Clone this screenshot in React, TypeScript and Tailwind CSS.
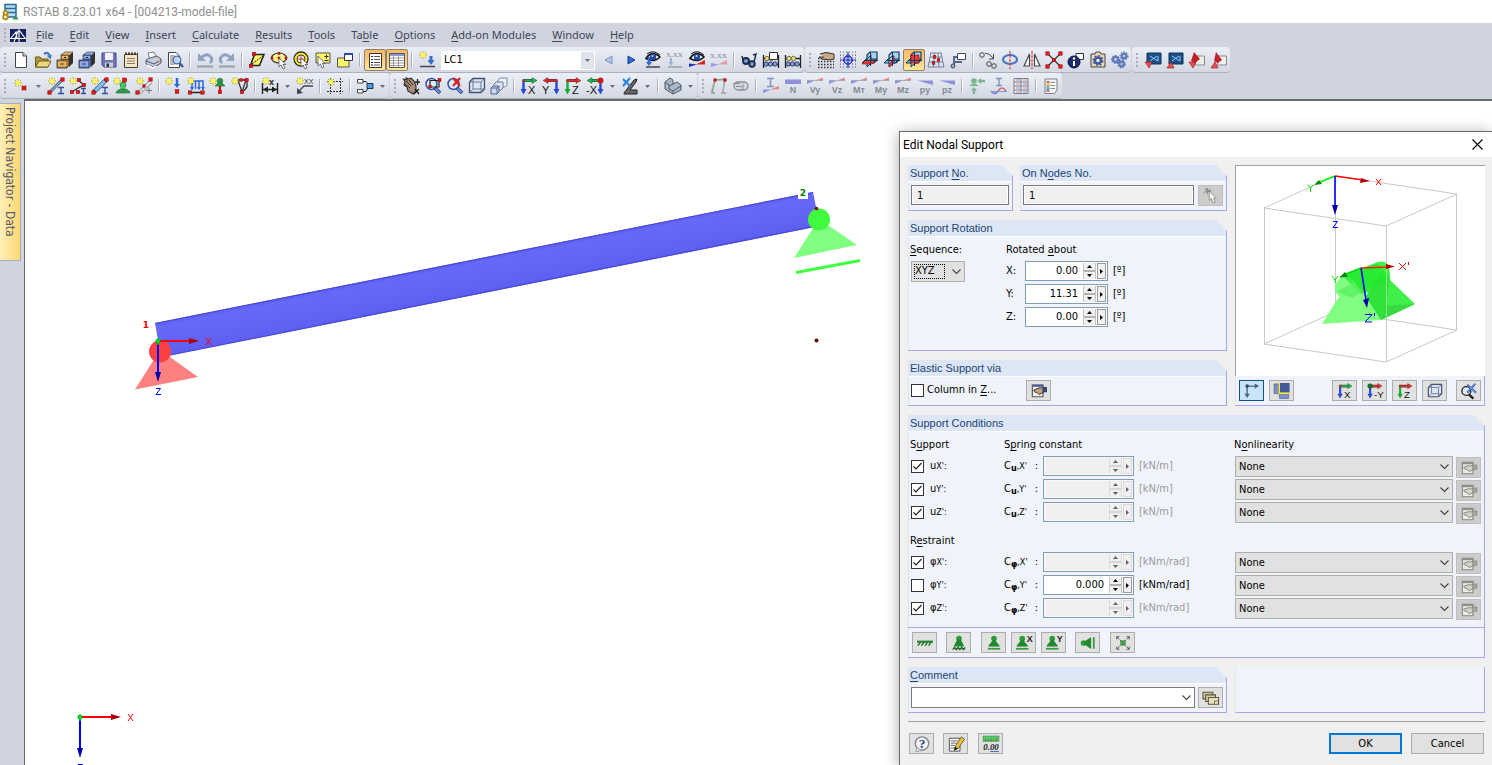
import { useId, useState } from 'react';
import type { ReactNode } from 'react';
import clsx from 'clsx';

const DIALOG_FONT = "font-['DejaVu_Sans_Condensed','Noto_Sans',sans-serif]";

/* ---------- small drawing helpers, used inside the 18x18 icons ---------- */

function Spark({ x = 5, y = 4 }: { x?: number; y?: number }) {
  return (
    <g transform={`translate(${x} ${y})`}>
      <path d="M0-4V4M-4 0H4M-3-3L3 3M3-3L-3 3" stroke="#b8ad18" />
      <circle r="2.4" fill="#fff75a" stroke="none" />
    </g>
  );
}

function Node({ x, y, s = 3.4 }: { x: number; y: number; s?: number }) {
  return <rect x={x - s / 2} y={y - s / 2} width={s} height={s} fill="#e81818" stroke="#8c0000" strokeWidth=".5" />;
}

function AxisIcon({ h, v, label, flip = false, dot }: { h: string; v: string; label: string; flip?: boolean; dot?: string }) {
  return (
    <>
      <g transform={flip ? 'translate(18 0) scale(-1 1)' : undefined}>
        <path d="M3 3.5H14" stroke="#333" strokeWidth="3" />
        <path d="M3 3.5H14" stroke={h} strokeWidth="2" />
        <path d="M12 .5L17 3.5L12 6.5Z" fill={h} stroke="#333" strokeWidth=".4" />
        <path d="M3.5 4V13" stroke={v} strokeWidth="2.4" />
        <path d="M.5 12H6.5L3.5 17.5Z" fill={v} />
        <circle cx="3.5" cy="3.5" r={dot ? 3 : 1.5} fill={dot ?? '#a33'} />
      </g>
      <text x={flip ? 0 : 8} y="16.5" fontSize="11" fill="#111" fontFamily="Liberation Sans, sans-serif">
        {label}
      </text>
    </>
  );
}

function ForceIcon({ label, kind = 'cross' }: { label: string; kind?: 'cross' | 'bar' | 'load' }) {
  return (
    <>
      {kind === 'cross' && (
        <>
          <path d="M1 3.5V7L9 3.5Z" fill="#8f8fdc" />
          <path d="M9 3.5L17 .5V3.5Z" fill="#e08a90" />
          <path d="M1 3.5H17" stroke="#999" strokeWidth=".6" />
        </>
      )}
      {kind === 'bar' && <path d="M1 2.5H17V7H1Z" fill="#8f8fdc" />}
      {kind === 'load' && <path d="M1 3.5H17V8Z" fill="#8f8fdc" />}
      <text x="9" y="16" textAnchor="middle" fontSize="9" fontWeight="bold" fill="#858a94" fontFamily="Liberation Sans, sans-serif">
        {label}
      </text>
    </>
  );
}

function WorkPlane({ red }: { red: string }) {
  return (
    <>
      <path d="M6 4L9 1H16V9L13 12H6Z" fill="#a9d4ee" stroke="#123a5c" strokeWidth="1.2" />
      <path d="M1 12L5 8H16L12 12Z" fill="#7fbde4" stroke="#123a5c" />
      <path d="M6 16V8L10 4V12Z" fill="#8fc9ea" stroke="#123a5c" />
      <path d={red} fill="#f03a3a" stroke="#8c0000" strokeWidth=".6" />
      <path d="M9.5 1V15M3 9.5H17" stroke="#123a5c" />
    </>
  );
}

function Magnifier() {
  return (
    <>
      <circle cx="7.5" cy="7" r="5.5" fill="#dcebfa" stroke="#3450a0" strokeWidth="1.5" />
      <path d="M11 11L16 16" stroke="#26407c" strokeWidth="3.6" />
      <path d="M11.5 11.5L15.5 15.5" stroke="#6f94e4" strokeWidth="2" />
    </>
  );
}

function Pointer() {
  return <path d="M9 7V16L11 14L13 18L15 17L13 13.5H16Z" fill="#fff" stroke="#555" strokeWidth=".8" />;
}

function Cabinet({ light, dark }: { light: string; dark: string }) {
  return (
    <>
      <path d="M5 4L9 1H17L13 5Z" fill={light} stroke="#333" strokeWidth=".6" />
      <path d="M13 5L17 1V12L13 16Z" fill="#333" />
      <path d="M5 4H13V9H5Z" fill={dark} stroke="#333" strokeWidth=".6" />
      <path d="M1 9H11L13 8V14L11 17H1Z" fill={dark} stroke="#333" strokeWidth=".8" />
      <path d="M2 10.5H10V15.5H2ZM6 5H12V7.5H6Z" fill={light} />
      <path d="M4.5 13H7.5M8 6.500H10" stroke="#222" strokeWidth="1.2" />
    </>
  );
}

function Abacus() {
  return (
    <>
      <path d="M1.5 4V17M16.5 4V17M1 7.5H17M1 13.5H17" stroke="#222" strokeWidth="1.3" />
      <circle cx="5" cy="7.5" r="2.2" fill="#f0df6a" stroke="#554" strokeWidth=".8" />
      <circle cx="9.5" cy="7.5" r="2.2" fill="#f0df6a" stroke="#554" strokeWidth=".8" />
      <circle cx="4" cy="13" r="2.2" fill="#7d9de0" stroke="#224" strokeWidth=".8" />
      <circle cx="8.5" cy="13" r="2.2" fill="#7d9de0" stroke="#224" strokeWidth=".8" />
      <circle cx="13" cy="13" r="2.2" fill="#7d9de0" stroke="#224" strokeWidth=".8" />
    </>
  );
}

function Eye() {
  return (
    <>
      <path d="M2 7.5Q8-1.5 16 6Q10 12 2 7.5Z" fill="#fff" stroke="#111" strokeWidth="1.6" />
      <path d="M3 3Q9-2 16 4" stroke="#111" />
      <circle cx="9" cy="6" r="3.2" fill="#2448a0" />
      <circle cx="8.5" cy="5" r="1" fill="#bfe0ff" />
    </>
  );
}

const DOT_GRID = 'M1 1H17M1 4H17M1 7H17M1 10H17M1 13H17M1 16H17';

const ICONS: Record<string, ReactNode> = {
  'New': (
    <>
      <path d="M3.5 1.5H11L14.5 5V16.5H3.5Z" fill="#fff" stroke="#444" />
      <path d="M11 1.5V5H14.5" fill="#ddd" stroke="#444" />
    </>
  ),
  'Open': (
    <>
      <path d="M1.5 16V6H6L8 8H14V16Z" fill="#b5983a" stroke="#6a5818" />
      <path d="M1.500 16L5 10H17L14 16Z" fill="#eadb80" stroke="#6a5818" />
      <path d="M10 3Q14 0 16 5" stroke="#4a7ab8" strokeWidth="2.2" />
      <path d="M12.5 4.5L18 4L16.5 8.5Z" fill="#4a7ab8" />
    </>
  ),
  'Project manager': <Cabinet light="#e2b56a" dark="#b57f32" />,
  'Block manager': <Cabinet light="#8fabe6" dark="#4d6fb8" />,
  'Save': (
    <>
      <path d="M2 2H16V16H4L2 14Z" fill="#7376bb" stroke="#44477e" />
      <path d="M5 2H13V9H5Z" fill="#f2f2fa" />
      <path d="M5 11.5H13V16H5Z" fill="#c9cbd8" />
      <path d="M6.5 12.5H9V16H6.500Z" fill="#333" />
    </>
  ),
  'Report': (
    <>
      <path d="M2.500 3.500H15.5V16.5H2.5Z" fill="#f4e6c8" stroke="#4a3b28" />
      <path d="M3 2.5H16" stroke="#4a3b28" strokeWidth="2" strokeDasharray="2 1" />
      <path d="M5 7.5H13M5 10H13M5 12.5H13" stroke="#8d7a60" />
    </>
  ),
  'Print': (
    <>
      <path d="M4 2L10 1L13 7L6 9Z" fill="#fff" stroke="#777" />
      <path d="M2 9L6 7L13 5L17 8V12L10 16L2 13Z" fill="#c6cae0" stroke="#55596e" />
      <path d="M2 10L10 13L17 9" stroke="#55596e" />
      <path d="M3 14L9 17L12 15" stroke="#fff" strokeWidth="1.4" />
      <path d="M15 8.5V10" stroke="#f0e020" strokeWidth="1.5" />
    </>
  ),
  'Print preview': (
    <>
      <path d="M2.5 1.5H10L13.5 5V16.5H2.5Z" fill="#fff" stroke="#444" />
      <path d="M4 5H9M4 7H8M4 9H8M4 11H8M4 13H9" stroke="#777" />
      <circle cx="11" cy="9" r="3.8" fill="#bcd8f8" stroke="#4c6fa8" strokeWidth="1.3" />
      <path d="M13.5 12L17 16" stroke="#3b5688" strokeWidth="2.4" />
    </>
  ),
  'Undo': (
    <>
      <path d="M5 7Q11 1 15 6Q17 9 14 12" stroke="#8fa3c0" strokeWidth="2.8" />
      <path d="M2 2V10H10Z" fill="#8fa3c0" />
      <path d="M1 15.5H17" stroke="#999fae" strokeWidth="2" />
    </>
  ),
  'Redo': (
    <>
      <path d="M13 7Q7 1 3 6Q1 9 4 12" stroke="#8fa3c0" strokeWidth="2.8" />
      <path d="M16 2V10H8Z" fill="#8fa3c0" />
      <path d="M1 15.5H17" stroke="#999fae" strokeWidth="2" />
    </>
  ),
  'Select rhomboid': (
    <>
      <path d="M6.5 3.5H16L11.5 14.5H2.5Z" fill="#fdf36a" stroke="#222" strokeWidth="1.5" />
      <path d="M4 13L15 5" stroke="#222" strokeDasharray="2 1" />
      <Node x={6} y={3} />
      <Node x={3} y={15} />
    </>
  ),
  'Select ellipse': (
    <>
      <ellipse cx="9" cy="7" rx="7.5" ry="5" fill="#fdf08a" stroke="#333" strokeWidth="1.2" />
      <Node x={2} y={7} s={2} />
      <Node x={9} y={7} s={2} />
      <Node x={9} y={2.5} s={2} />
      <Node x={16} y={7} s={2} />
      <Pointer />
    </>
  ),
  'Select ring': (
    <>
      <circle cx="9" cy="8" r="7" fill="#fde92a" stroke="#333" strokeWidth="1.3" />
      <circle cx="9" cy="8" r="4" fill="#fff" stroke="#333" />
      <path d="M9 5V11M6 8H12" stroke="#d22" />
      <Pointer />
    </>
  ),
  'Select special': (
    <>
      <path d="M2 2H16V12H2Z" fill="#fdf36a" stroke="#555" />
      <path d="M10.5 5.5H14.500M12.500 3.500V7.5M10.5 9.5H14.5" stroke="#333" />
      <path d="M4 5V15L6.5 13L8 17L10 16L8.5 12.500H11Z" fill="#fff" stroke="#555" strokeWidth=".8" />
    </>
  ),
  'New window': (
    <>
      <path d="M1.5 7H13V16H1.5Z" fill="#fdf36a" stroke="#555" />
      <path d="M8.5 2.5H16.5V9.5H8.5Z" fill="#fff" stroke="#333" />
      <path d="M8 3H17" stroke="#2c4a9e" strokeWidth="2" />
    </>
  ),
  'Navigator': (
    <>
      <path d="M3.500 2.500H15.5V16.5H3.500Z" fill="#fff" stroke="#333" />
      <path d="M5 5.5H7M5 8.5H7M5 11.5H7M5 14H7" stroke="#222" />
      <path d="M8 5.5H14M8 8.500H14M8 11.500H14M8 14H14" stroke="#555" />
    </>
  ),
  'Tables': (
    <>
      <path d="M1.500 2.5H16.5V16.5H1.5Z" fill="#fff" stroke="#555" />
      <path d="M2 4H16" stroke="#8a9cd8" strokeWidth="2" />
      <path d="M2 7H16M2 9.500H16M2 12H16M2 14.500H16M5.5 5V16M10.5 5V16" stroke="#777" strokeWidth=".7" />
    </>
  ),
  'New load case': (
    <>
      <Spark />
      <path d="M13 5V12" stroke="#3a6ec8" strokeWidth="3" />
      <path d="M9.5 9H16.5L13 14Z" fill="#3a6ec8" />
      <path d="M2 15.5H17" stroke="#444" strokeWidth="1.5" />
    </>
  ),
  'Previous': <path d="M12 5L5 9L12 13Z" fill="#b4c6ea" stroke="#7d94c8" />,
  'Next': <path d="M6 5L13 9L6 13Z" fill="#2f66d8" stroke="#1d3f94" />,
  'Show loads': (
    <>
      <Eye />
      <path d="M5 6V13" stroke="#2f66d8" strokeWidth="2.4" />
      <path d="M2 11H8L5 15Z" fill="#2f66d8" />
      <path d="M2 16H16" stroke="#444" strokeWidth="1.5" />
    </>
  ),
  'Show load values': (
    <>
      <text x="0" y="6" fontSize="7" fill="#7c8290" fontFamily="Liberation Serif, serif">X.XX</text>
      <path d="M5 7V13" stroke="#9fb0d8" strokeWidth="2" />
      <path d="M2.5 11H7.5L5 15Z" fill="#9fb0d8" />
      <path d="M2 16H16" stroke="#9aa0ac" strokeWidth="1.5" />
    </>
  ),
  'Show results': (
    <>
      <Eye />
      <path d="M1 16V12.5L9 13.5Z" fill="#1b2fd0" />
      <path d="M8 13.5L17 9V13.5Z" fill="#e02020" />
    </>
  ),
  'Show result values': (
    <>
      <text x="0" y="7" fontSize="7" fill="#7c8290" fontFamily="Liberation Serif, serif">X.XX</text>
      <path d="M1 16V12L9 13.500Z" fill="#9a9ae0" />
      <path d="M8 13.5L17 9V13.5Z" fill="#e89aa0" />
    </>
  ),
  'Glasses': (
    <>
      <circle cx="6" cy="10" r="3" fill="#7f9cd0" stroke="#1a2848" strokeWidth="1.8" />
      <circle cx="12" cy="13" r="2.800" fill="#7f9cd0" stroke="#1a2848" strokeWidth="1.8" />
      <path d="M3 9L2 5M8 10L10 11M14 11L16 3L13 4" stroke="#1a2848" strokeWidth="1.4" />
    </>
  ),
  'Calculate window': (
    <>
      <Abacus />
      <path d="M7.5 1.5H15.5V8.5H7.5Z" fill="#fff" stroke="#333" />
    </>
  ),
  'Calculate all': <Abacus />,
  'Grid snap': (
    <>
      <path d="M1 7.500H17M1 10.500H17M1 13.500H17M1 16.500H17" stroke="#333" strokeWidth="1.3" strokeDasharray="1.5 1.5" />
      <path d="M3 3L9 1.5L17 3V8L13 9L5 8L2 6H7" fill="#c9a98c" stroke="#3a2b20" strokeWidth="1" />
    </>
  ),
  'Object snap': (
    <>
      <path d={DOT_GRID} stroke="#556" strokeDasharray="1 2" />
      <circle cx="9" cy="9" r="4" stroke="#2030c8" strokeWidth="1.4" />
      <path d="M9 1V17M1 9H17" stroke="#2030c8" strokeWidth="1.2" />
    </>
  ),
  'Work plane XY': <WorkPlane red="M1 13L5 9H15L11 13Z" />,
  'Work plane YZ': <WorkPlane red="M6 15L11 5V11L7 16Z" />,
  'Work plane XZ': <WorkPlane red="M6 4H14V12H6Z" />,
  'Grid': (
    <>
      <path d="M4 2L1 16M7.5 2L6.5 16M11 2L12 16M14 2L17 16M3 2H15M3 6H15M2 11H16M1 16H17" stroke="#76829c" />
      <Node x={7.5} y={6} s={2.6} />
      <Node x={11.5} y={9} s={2.6} />
      <Node x={6.5} y={12} s={2.6} />
    </>
  ),
  'Comment callout': (
    <>
      <path d="M8.5 2.5H16.5V8.5H8.5Z" fill="#fff" stroke="#445" />
      <path d="M8 6H5V15M5 11H13" stroke="#55688e" strokeWidth="2" />
      <circle cx="4" cy="15" r="2" fill="#9db4de" stroke="#445" />
    </>
  ),
  'Move copy': (
    <>
      <circle cx="3" cy="4" r="2.3" stroke="#444" />
      <circle cx="10" cy="13" r="2.3" stroke="#444" />
      <circle cx="15" cy="15" r="2.3" stroke="#444" />
      <path d="M6 2Q10 2 14 7M14.500 3V8H10" stroke="#444" />
    </>
  ),
  'Rotate': (
    <>
      <ellipse cx="9" cy="8.5" rx="7" ry="4.5" stroke="#4a78c0" strokeWidth="2.2" />
      <path d="M9 0V18" stroke="#e02020" strokeDasharray="3 1" />
    </>
  ),
  'Mirror': (
    <>
      <path d="M6.5 3V15H1Z" fill="#fff" stroke="#444" strokeWidth="1.2" />
      <path d="M11.5 3V15H17Z" fill="#fff" stroke="#444" strokeWidth="1.2" />
      <path d="M9 0V18" stroke="#e02020" strokeDasharray="3 1" />
    </>
  ),
  'Divide': (
    <>
      <path d="M2 2L16 16M16 2L2 16" stroke="#333" strokeWidth="1.3" />
      <Node x={2.5} y={2.5} />
      <Node x={15.5} y={2.5} />
      <Node x={2.5} y={15.5} />
      <Node x={15.5} y={15.5} />
      <Node x={9} y={9} />
    </>
  ),
  'Info': (
    <>
      <path d="M9 2.5H16.5V8.500H9Z" fill="#fff" stroke="#333" />
      <circle cx="7" cy="11" r="6" fill="#1c2c68" stroke="#0b1440" />
      <path d="M7 10V15" stroke="#fff" strokeWidth="2" />
      <circle cx="7" cy="7.5" r="1.2" fill="#fff" />
    </>
  ),
  'Program options': (
    <>
      <path d="M2 3H6L7 1H11L12 3H16V16H2Z" fill="#ead9b2" stroke="#444" />
      <circle cx="9" cy="9.5" r="3" fill="#fff" stroke="#3c5898" strokeWidth="2.6" />
      <circle cx="9" cy="9.5" r="4.800" stroke="#3c5898" strokeWidth="1.4" strokeDasharray="2 1.700" />
    </>
  ),
  'Settings': (
    <>
      <circle cx="4.5" cy="8.5" r="2.5" stroke="#5f7cc0" strokeWidth="2.4" />
      <circle cx="4.5" cy="8.5" r="4" stroke="#3c5490" strokeWidth="1" strokeDasharray="1.500 1.500" />
      <circle cx="13" cy="5" r="2.300" stroke="#5f7cc0" strokeWidth="2.4" />
      <circle cx="13" cy="5" r="4" stroke="#3c5490" strokeWidth="1" strokeDasharray="1.500 1.500" />
      <circle cx="10.5" cy="13" r="2.2" stroke="#5f7cc0" strokeWidth="2.4" />
      <circle cx="10.5" cy="13" r="3.800" stroke="#3c5490" strokeWidth="1" strokeDasharray="1.500 1.500" />
    </>
  ),
  'Import model': (
    <>
      <path d="M3 2H17V13H3Z" fill="#1d4f86" stroke="#10335a" />
      <path d="M6 5L14 10M13 5L6 10M14 5V10" stroke="#8fd0ff" />
      <path d="M1 11H8L5 17Z" fill="#f05050" stroke="#8c1010" strokeWidth=".6" />
    </>
  ),
  'Export model': (
    <>
      <path d="M3 2H17V13H3Z" fill="#1d4f86" stroke="#10335a" />
      <path d="M6 5L14 10M13 5L6 10M14 5V10" stroke="#8fd0ff" />
      <path d="M1 17H8L5 11Z" fill="#f05050" stroke="#8c1010" strokeWidth=".6" />
    </>
  ),
  'Import PDF': (
    <>
      <path d="M7.500 5H16.500V14H7.500Z" fill="#eef0ea" stroke="#888" />
      <path d="M6 1L12 8L7 12L3 10Z" fill="#c41f2c" />
      <path d="M1 11H8L5 17Z" fill="#f05050" stroke="#8c1010" strokeWidth=".6" />
    </>
  ),
  'Export PDF': (
    <>
      <path d="M7.500 5H16.500V14H7.500Z" fill="#eef0ea" stroke="#888" />
      <path d="M6 1L12 9L8 12L4 10Z" fill="#c41f2c" />
      <path d="M1 17H8L5 11Z" fill="#f05050" stroke="#8c1010" strokeWidth=".6" />
    </>
  ),

  /* second row */
  'New node': (
    <>
      <Spark x={6} y={6} />
      <Node x={12} y={11} s={4} />
    </>
  ),
  'New member': (
    <>
      <path d="M3 15L15 3" stroke="#333" strokeWidth="2.6" />
      <path d="M3 15L15 3" stroke="#8fc4ee" strokeWidth="1.2" />
      <Spark />
      <Node x={2.5} y={15.5} />
      <Node x={15.5} y={2.5} />
      <path d="M11 10.5H17M11 16.5H17M14 10V17" stroke="#3450a0" strokeWidth="1.4" />
    </>
  ),
  'New polyline': (
    <>
      <path d="M3 15L9 11L15 8L9 3" stroke="#333" strokeWidth="1.4" />
      <Spark x={4} />
      <Node x={3} y={15} />
      <Node x={10} y={3} />
      <Node x={15} y={8} />
      <Node x={9} y={15} />
      <path d="M12 11.5H17M12 16.5H17M14.5 11V17" stroke="#3450a0" strokeWidth="1.4" />
    </>
  ),
  'New set': (
    <>
      <path d="M3 15L15 3" stroke="#234" strokeWidth="4.5" />
      <path d="M4 14L14 4" stroke="#7fc0f0" strokeWidth="3.2" />
      <Spark x={4} />
      <Node x={2.5} y={15.5} />
      <Node x={15.5} y={2.5} />
      <path d="M11 10.5H17M11 16.5H17M14 10V17" stroke="#3450a0" strokeWidth="1.4" />
    </>
  ),
  'New nodal support': (
    <>
      <circle cx="10" cy="8" r="3" fill="#4fbf6a" stroke="#176c2c" strokeWidth=".6" />
      <path d="M8 9H12L13 13H7Z" fill="#4fbf6a" />
      <path d="M3 16Q4 12 10 12Q16 12 17 16Z" fill="#2f9a4c" stroke="#176c2c" strokeWidth=".6" />
      <Spark x={4} />
      <Node x={11.5} y={3} s={4} />
    </>
  ),
  'New hinge': (
    <>
      <path d="M3 15L15 3M5 17L17 6" stroke="#aaa" strokeWidth="1.4" />
      <Spark />
      <Node x={2.5} y={15.5} />
      <Node x={9} y={9} s={2.4} />
      <Node x={15.5} y={2.5} />
      <path d="M11 13.5H17M14 10.5V16.5" stroke="#777" />
    </>
  ),
  'New nodal load': (
    <>
      <path d="M12 1V8" stroke="#2f66d8" strokeWidth="2.400" />
      <path d="M9 7H15L12 11Z" fill="#2f66d8" />
      <Spark x={4} />
      <Node x={12} y={14.5} s={3.6} />
    </>
  ),
  'New member load': (
    <>
      <path d="M5 13V4H16V13M8.5 4V12M12 4V12" stroke="#2f66d8" strokeWidth="1.5" />
      <path d="M3 10L5 13L7 10ZM10 10L12 13L14 10ZM14 10L16 13L18 10Z" fill="#2f66d8" />
      <path d="M2 15.500H17" stroke="#222" strokeWidth="1.5" />
      <Spark x={4} />
      <Node x={3} y={15.5} />
      <Node x={15.5} y={15.5} />
    </>
  ),
  'New imposed displacement': (
    <>
      <circle cx="11" cy="4" r="2.8" fill="#2f9a4c" stroke="#176c2c" strokeWidth=".6" />
      <path d="M6 9H16L13 6H9Z" fill="#2f9a4c" stroke="#176c2c" strokeWidth=".6" />
      <path d="M11 9V13" stroke="#c01818" strokeWidth="2.2" />
      <Spark x={4} />
      <Node x={11} y={15} />
    </>
  ),
  'New imperfection': (
    <>
      <path d="M7 3L11 15L15 3H7M11 15Q19 10 15 3" stroke="#333" strokeWidth="1.3" />
      <Spark x={4} />
      <Node x={15.5} y={3} />
      <Node x={10} y={3} s={2.5} />
      <Node x={11} y={15} />
    </>
  ),
  'Dimension': (
    <>
      <path d="M1.5 6V17M16.5 6V17M2 12.500H16" stroke="#222" strokeWidth="1.4" />
      <path d="M2 12.500L7 9.500V15.500ZM16 12.500L11 9.500V15.500Z" fill="#222" />
      <Spark />
      <text x="8" y="8" fontSize="9" fontWeight="bold" fill="#222" fontFamily="Liberation Sans, sans-serif">x</text>
    </>
  ),
  'New comment': (
    <>
      <path d="M2 15L8 9H17" stroke="#445" strokeWidth="1.3" />
      <path d="M1 17V11L7 16Z" fill="#445" />
      <Spark x={4} />
      <text x="8" y="7" fontSize="7" fill="#333" fontFamily="Liberation Sans, sans-serif">XX</text>
    </>
  ),
  'New guideline': (
    <>
      <path d="M4.500 1V17M14.5 1V17M1 4.5H17M1 14.5H17" stroke="#333" strokeDasharray="2 1" />
      <Spark x={5} y={5} />
    </>
  ),
  'Connect': (
    <>
      <path d="M1.5 2.5H7V6H1.5ZM1.5 12.5H7V16H1.500Z" fill="#fff" stroke="#444" />
      <path d="M7 4.500H10L12 7M7 14.500H10L12 11" stroke="#222" />
      <path d="M11 6.5H17V11.5H11Z" fill="#4a9ae0" stroke="#234" />
    </>
  ),
  'Pan': (
    <>
      <path d="M3 5L1.5 2L5 3L4 1L8 2L9 1L12 4L14 9V14L11 17L6 14L5 10L2 8Z" fill="#a88d78" stroke="#332a24" strokeWidth="1.100" />
      <path d="M4 4L9 9M7 3L11 8M3 7L8 11" stroke="#332a24" />
      <path d="M13 5H18M15.500 2V8M12 17L17 12M13 12L17 17" stroke="#222" strokeWidth="1.3" />
    </>
  ),
  'Zoom window': (
    <>
      <Magnifier />
      <path d="M6 5.500V3.5H15V10H6Z" stroke="#222" strokeWidth="1.2" />
      <Node x={6} y={9.5} s={2.5} />
      <Node x={15.5} y={3} s={3} />
    </>
  ),
  'Zoom previous': (
    <>
      <Magnifier />
      <path d="M7 1L14 9M14 1L7 9" stroke="#e02020" strokeWidth="2.2" />
    </>
  ),
  'Isometric': (
    <>
      <path d="M1.5 5L5 1.5H16.5V12L13 15.5H1.5Z" fill="#dbe4f2" stroke="#44506e" strokeWidth="1.3" />
      <path d="M1.5 5H13V15.5M13 5L16.5 1.5M5 2V12H16M5 12L1.5 15.5" stroke="#6d7a98" />
    </>
  ),
  'Perspective': (
    <>
      <path d="M8 3L10 1H17V8L15 10H8Z" fill="#e8eefa" stroke="#7a88a8" />
      <path d="M4 7L6 5H13V11L11 13H4Z" fill="#dbe4f6" stroke="#6a7898" />
      <path d="M1 11L3 9H9V15L7 17H1Z" fill="#cfdaf2" stroke="#55648a" />
      <path d="M1 11H7V17M7 11L9 9" stroke="#55648a" />
    </>
  ),
  'View X': <AxisIcon h="#18b848" v="#2848d8" label="X" />,
  'View Y': <AxisIcon h="#e82828" v="#2848d8" label="Y" flip />,
  'View Z': <AxisIcon h="#e82828" v="#18a838" label="Z" />,
  'View -X': <AxisIcon h="#18b848" v="#2848d8" label="-X" flip dot="#d01818" />,
  'View -Y': <AxisIcon h="#e82828" v="#2848d8" label="-Y" dot="#18702c" />,
  'Visibility': (
    <>
      <path d="M3 16L13 3L16 2L15 5L9 13H16V17H3Z" fill="#666" stroke="#222" />
      <path d="M2 2L9 9M9 1L2 9" stroke="#2f86d8" strokeWidth="2.2" />
    </>
  ),
  'Render model': (
    <>
      <path d="M1 5L6 1L9 3V7L13 5L17 8V13L9 17L1 12Z" fill="#a9b8c6" stroke="#4c5866" />
      <path d="M1 5L5 8V12L9 14V17M9 7L5 9M9 14L17 9" stroke="#4c5866" />
    </>
  ),
  'Deformation': (
    <>
      <path d="M2 16L5 3L15 2L13 15" stroke="#7da086" strokeWidth="1.3" />
      <path d="M1 15L4 4L14 3L13 14" stroke="#bbb" />
      <Node x={5} y={3} s={2.4} />
      <Node x={15} y={3} s={2.4} />
      <path d="M1 16H5M11 16H16" stroke="#999" strokeWidth="1.5" />
    </>
  ),
  'Member info': (
    <>
      <rect x="2" y="5" width="14" height="8" rx="4" fill="#d5d7dc" stroke="#8b8f98" strokeWidth="1.300" />
      <path d="M1 6.500H8M4 9.500H10M11 7V12" stroke="#8b8f98" />
    </>
  ),
  'Section forces': (
    <>
      <path d="M5 1.5H12M8.5 1V9M5 9.5H12" stroke="#8295c0" strokeWidth="1.5" />
      <path d="M1 16V12.500H9Z" fill="#8f8fdc" />
      <path d="M8 12.500L17 9V12.500Z" fill="#e08a90" />
    </>
  ),
  'N': <ForceIcon label="N" kind="bar" />,
  'Vy': <ForceIcon label="Vy" />,
  'Vz': <ForceIcon label="Vz" />,
  'MT': <ForceIcon label="Mт" />,
  'My': <ForceIcon label="My" />,
  'Mz': <ForceIcon label="Mz" />,
  'py': <ForceIcon label="py" kind="load" />,
  'pz': <ForceIcon label="pz" kind="load" />,
  'Support forces': (
    <>
      <circle cx="6" cy="4" r="2.800" fill="#7db58a" />
      <path d="M1 9Q6 4 11 9Z" fill="#7db58a" />
      <path d="M6 17V12M17 4H12" stroke="#7db58a" strokeWidth="2.400" />
      <path d="M3 13.500H9L6 10ZM13 1V7L9.500 4Z" fill="#7db58a" />
    </>
  ),
  'Result diagrams': (
    <>
      <path d="M6 1.5H12M9 1V8M6 8.5H12" stroke="#8295c0" strokeWidth="1.5" />
      <path d="M1 14Q5 19 8 14" stroke="#7d7dd8" strokeWidth="1.500" />
      <path d="M8 14Q12 8 16 14" stroke="#d07078" strokeWidth="1.500" />
      <path d="M1 14.5H17" stroke="#8295c0" />
    </>
  ),
  'Result tables': (
    <>
      <path d="M2 1.5H16V16.5H2Z" fill="#eef0f6" stroke="#7b7f88" />
      <path d="M2 5H16M2 9H16M2 13H16M9 1V17" stroke="#7b7f88" />
      <path d="M4 3H8M11 7H15M4 11H8M11 15H15" stroke="#8a8ae0" />
      <path d="M11 3H15M4 7H8M11 11H15M4 15H8" stroke="#e08a90" />
    </>
  ),
  'Panel': (
    <>
      <path d="M3 2H15V13L12.500 16.5H3Z" fill="#f6f6f6" stroke="#7b7f88" />
      <path d="M6 4V7M6 13V15" stroke="#e06868" strokeWidth="3" />
      <path d="M6 6V8" stroke="#e8d860" strokeWidth="3" />
      <path d="M6 8V11" stroke="#7cc080" strokeWidth="3" />
      <path d="M6 11V13.500" stroke="#7a90d8" strokeWidth="3" />
      <path d="M8.500 5.5H13M8.500 8.5H13M8.500 11.5H13" stroke="#8b8f98" />
    </>
  ),

  /* dialog */
  'Pick': (
    <>
      <path d="M2 1L9 4M1 5L9 2M5 0V7" stroke="#8b8b86" strokeWidth="1.3" />
      <path d="M7 3V14L9.500 12L11.500 17L14 16L12 11.5H15Z" fill="#f4f4ee" stroke="#777" strokeWidth=".8" />
    </>
  ),
  'Edit': (
    <>
      <path d="M1.500 2.500H13.500V15.5H1.500Z" fill="#f0f0ea" stroke="#555" strokeWidth="1.300" />
      <path d="M1 3H14" stroke="#44588c" strokeWidth="2.400" />
      <path d="M3 8L9 5.500H14V10.500L9 13L7 11L4 10Z" fill="#c0a083" stroke="#3a2b20" />
      <path d="M13 4.500H18V10.500H13Z" fill="#33486c" />
    </>
  ),
  'Edit disabled': (
    <>
      <path d="M1.500 2.5H13.500V15.5H1.500Z" fill="#ecece6" stroke="#84847e" strokeWidth="1.200" />
      <path d="M1 3.500H14" stroke="#8f8f88" strokeWidth="2.400" />
      <path d="M3 8L8 6.500H14V11L9 13L7 11L4 10Z" fill="#d2d2cc" stroke="#77776f" strokeWidth=".9" />
      <path d="M13 5.500H18V10.500H13Z" fill="#a4a49e" stroke="#77776f" strokeWidth=".5" />
    </>
  ),
  'Local axes': (
    <>
      <path d="M3.5 4V14M3 3.5H13" stroke="#4a6284" strokeWidth="1.5" />
      <path d="M12 .5L17 3.5L12 6.5ZM.5 12H6.5L3.5 17Z" fill="#4a6284" />
      <circle cx="3.5" cy="3.5" r="2" fill="#33486a" />
    </>
  ),
  'Render': (
    <>
      <path d="M0 1H6V12H0Z" fill="#7f8fc4" stroke="#44548e" strokeWidth=".6" />
      <path d="M6 0H17.500V11H6Z" fill="#44589c" />
      <path d="M6 12H16.500V17.500H6Z" fill="#7f8fc4" stroke="#44548e" strokeWidth=".6" />
      <path d="M6 0V11.5H17.500" stroke="#f6ea20" strokeWidth="1.5" />
    </>
  ),
  'Zoom all': (
    <>
      <circle cx="6" cy="9" r="5" fill="#e4ecf4" stroke="#222" strokeWidth="1.5" />
      <path d="M9 13L14 17.500" stroke="#222" strokeWidth="2.800" />
      <path d="M7 2L17 11M16 1L7 11" stroke="#3058b8" strokeWidth="2.2" />
      <path d="M7 2L17 11M16 1L7 11" stroke="#8fb0f0" strokeWidth=".8" />
    </>
  ),
  'Fixed': (
    <>
      <path d="M0 7.500H18" stroke="#1f8a2c" strokeWidth="2.4" />
      <path d="M1 12L4 8M5 12L8 8M9 12L12 8M13 12L16 8" stroke="#1f6a2c" strokeWidth="1.6" />
    </>
  ),
  'Hinged': (
    <>
      <circle cx="9" cy="4" r="3.200" fill="#2f9a3c" />
      <path d="M7 5H11L15 13H3Z" fill="#1f8a2c" />
      <path d="M2 16.500L4 14L6 16.500L8 14L10 16.500L12 14L14 16.500L16 14" stroke="#1f6a2c" strokeWidth="1.6" />
    </>
  ),
  'Sliding': (
    <>
      <circle cx="9" cy="4" r="3.200" fill="#2f9a3c" />
      <path d="M8 6H10L15 12.500H3Z" fill="#1f8a2c" stroke="#1f8a2c" />
      <path d="M2 15.5H16" stroke="#3b9a44" strokeWidth="2" />
    </>
  ),
  'Lateral': (
    <>
      <circle cx="4" cy="9" r="3.200" fill="#2f9a3c" />
      <path d="M5 8L12 3V15L5 10Z" fill="#1f8a2c" stroke="#1f8a2c" />
      <path d="M15.500 2.500V15.500" stroke="#3b9a44" strokeWidth="2" />
    </>
  ),
  'Free': (
    <>
      <path d="M2 2L16 16M16 2L2 16" stroke="#555" strokeDasharray="4 1" />
      <path d="M2 5V2H5M13 2H16V5M16 13V16H13M5 16H2V13" stroke="#444" />
      <path d="M6.500 6.500H11.500V11.500H6.500Z" fill="#3fa84c" stroke="#1f6a2c" strokeWidth=".6" />
    </>
  ),
  'Comment library': (
    <>
      <path d="M0 2.5H11V10H0Z" fill="#cfc498" stroke="#5c5540" strokeWidth="1.200" />
      <path d="M3 5.5H14V13H3Z" fill="#ddd2a8" stroke="#5c5540" strokeWidth="1.200" />
      <path d="M6 8.500H17.500V16H6Z" fill="#e9dfb8" stroke="#5c5540" strokeWidth="1.200" />
      <path d="M13 16V12.500H17.500" fill="#fff" stroke="#5c5540" />
    </>
  ),
  'Help': (
    <>
      <circle cx="9" cy="8.500" r="7.500" fill="#f0f2f6" stroke="#7d848e" strokeWidth="1.5" />
      <path d="M3 13L2 18L9 16Z" fill="#d7dbe2" stroke="#7d848e" strokeWidth=".6" />
      <text x="9" y="13.500" textAnchor="middle" fontSize="15" fontWeight="bold" fill="#2c4470" fontFamily="Liberation Serif, serif">?</text>
    </>
  ),
  'Notes': (
    <>
      <path d="M1.500 2.5H13.5V17H1.500Z" fill="#fff" stroke="#444" />
      <path d="M3 5.5H11M3 8H10M3 10.5H8M3 13.5H8" stroke="#556" />
      <path d="M8 12L15 1L18.500 3.500L11.500 14L7 16Z" fill="#f2c32c" stroke="#333" strokeWidth=".8" />
      <path d="M8 12L11.500 14L7 16.500Z" fill="#222" />
    </>
  ),
  'Units': (
    <>
      <path d="M0 0H18V6H0Z" fill="#5fc46a" stroke="#3b8a44" strokeWidth=".6" />
      <path d="M3 3V6M6 4V6M9 3V6M12 4V6M15 3V6" stroke="#1f6a2c" strokeWidth=".8" />
      <text x="9" y="15.500" textAnchor="middle" fontSize="10" fontStyle="italic" fontWeight="bold" fill="#222" fontFamily="Liberation Serif, serif">0.00</text>
      <path d="M8 17.500H18" stroke="#3a58b0" />
    </>
  ),
};

ICONS['Sliding X'] = (
  <>
    <g transform="translate(-2 0)">{ICONS['Sliding']}</g>
    <text x="12" y="8" fontSize="10" fontWeight="bold" fill="#222" fontFamily="Liberation Sans, sans-serif">X</text>
  </>
);
ICONS['Sliding Y'] = (
  <>
    <g transform="translate(-2 0)">{ICONS['Sliding']}</g>
    <text x="12" y="8" fontSize="10" fontWeight="bold" fill="#222" fontFamily="Liberation Sans, sans-serif">Y</text>
  </>
);

function Icon({ name }: { name: string }) {
  return (
    <svg className="size-[18px] shrink-0 overflow-visible" viewBox="0 0 18 18" fill="none" aria-hidden="true">
      {ICONS[name]}
    </svg>
  );
}

/* Underlines the letter that follows an underscore */
function Mnemonic({ text }: { text: string }) {
  const at = text.indexOf('_');
  if (at < 0) return <>{text}</>;
  return (
    <>
      {text.slice(0, at)}
      <span className="underline underline-offset-2">{text[at + 1]}</span>
      {text.slice(at + 2)}
    </>
  );
}

/* ---------- main window ---------- */

const MENU = ['_File', '_Edit', '_View', '_Insert', '_Calculate', '_Results', '_Tools', 'Ta_ble', '_Options', '_Add-on Modules', '_Window', '_Help'];

// '|' is a separator, '>' at the end adds a drop-down arrow
const FILE_TOOLS = ['New', 'Open', 'Project manager', 'Block manager', 'Save', 'Report', 'Print', 'Print preview', '|', 'Undo', 'Redo', '|', 'Select rhomboid', 'Select ellipse', 'Select ring', 'Select special', 'New window', '|', 'Navigator', 'Tables', '|', 'New load case'];
const LOAD_TOOLS = ['Previous', 'Next', 'Show loads', 'Show load values', 'Show results', 'Show result values', '|', 'Glasses', 'Calculate window', 'Calculate all'];
const PLANE_TOOLS = ['Grid snap', 'Object snap', 'Work plane XY', 'Work plane YZ', 'Work plane XZ', 'Grid', 'Comment callout', '|', 'Move copy', 'Rotate', 'Mirror', 'Divide', 'Info', 'Program options', 'Settings'];
const EXPORT_TOOLS = ['Import model', 'Export model', 'Import PDF', 'Export PDF'];
const INSERT_TOOLS = ['New node>', 'New member', 'New polyline', 'New set', 'New nodal support', 'New hinge', '|', 'New nodal load', 'New member load', 'New imposed displacement', 'New imperfection', '|', 'Dimension>', 'New comment', '|', 'New guideline', '|', 'Connect>'];
const VIEW_TOOLS = ['Pan', 'Zoom window', 'Zoom previous', 'Isometric', 'Perspective', '|', 'View X', 'View Y', 'View Z', 'View -X>', 'Visibility>', '|', 'Render model>'];
const RESULT_TOOLS = ['Deformation', 'Member info', '|', 'Section forces', 'N', 'Vy', 'Vz', 'MT', 'My', 'Mz', 'py', 'pz', '|', 'Support forces', 'Result diagrams', 'Result tables', '|', 'Panel'];
const ACTIVE_TOOLS = ['Navigator', 'Tables', 'Work plane XZ'];

function DownArrow() {
  return (
    <svg className="h-[3px] w-[5px]" viewBox="0 0 5 3" aria-hidden="true">
      <path d="M0 0H5L2.5 3Z" fill="#6a6f7a" />
    </svg>
  );
}

function Tools({ items }: { items: string[] }) {
  return (
    <>
      {items.map((item, i) => {
        if (item === '|') {
          return (
            <span key={i} className="flex w-2 justify-center">
              <span className="h-[14px] w-[2px] border-l border-[#a9afbb] bg-white" />
            </span>
          );
        }
        const name = item.replace('>', '');
        return (
          <span key={i} className="flex items-center">
            <button
              type="button"
              aria-label={name}
              className={clsx(
                'flex h-[22px] w-[22px] items-center justify-center',
                ACTIVE_TOOLS.includes(name) && 'rounded-xs border border-[#8f8168] bg-linear-to-b from-[#fbb765] to-[#ffe79a]',
              )}
            >
              <Icon name={name} />
            </button>
            {item.endsWith('>') && (
              <button type="button" aria-label={`${name} menu`} className="flex h-[22px] w-[13px] items-center justify-center">
                <DownArrow />
              </button>
            )}
          </span>
        );
      })}
    </>
  );
}

function Grip() {
  return (
    <span className="flex w-[10px] flex-col items-center gap-[2px]">
      <i className="size-[2px] bg-[#a8aebb]" />
      <i className="size-[2px] bg-[#a8aebb]" />
      <i className="size-[2px] bg-[#a8aebb]" />
      <i className="size-[2px] bg-[#a8aebb]" />
    </span>
  );
}

function Toolbar({ label, children }: { label: string; children: ReactNode }) {
  return (
    <div
      role="toolbar"
      aria-label={label}
      className="mr-px flex h-[26px] shrink-0 items-center rounded-sm border-b border-[#aab0bc] bg-linear-to-b from-[#ebeff7] to-[#d3d8e3] pt-px"
    >
      <Grip />
      {children}
    </div>
  );
}

function TitleBar() {
  return (
    <header className="flex h-[23px] shrink-0 items-center gap-1 bg-white pl-[1px] text-[12px] text-[#8f8f8f]">
      <svg className="size-[18px]" viewBox="0 0 18 18" fill="none" aria-hidden="true">
        <path d="M4 1.500H15V14H4Z" fill="#b8dff5" stroke="#2a6a94" strokeWidth="1.5" />
        <path d="M4 5.500H15M4 9.500H15" stroke="#2a6a94" strokeWidth="1.5" />
        <path d="M12 14.5H17V16.500H12Z" fill="#2f9a3c" />
        <circle cx="4.500" cy="10" r="2" fill="#fff" stroke="#b38a10" strokeWidth="1.8" />
        <circle cx="4.500" cy="14" r="2.3" fill="#fff" stroke="#b38a10" strokeWidth="1.8" />
      </svg>
      <h1 className="font-[Roboto,sans-serif]">RSTAB 8.23.01 x64 - [004213-model-file]</h1>
    </header>
  );
}

function MenuBar() {
  return (
    <nav className="flex h-[24px] shrink-0 items-center">
      <Grip />
      <svg className="mr-[2px] h-[13px] w-4" viewBox="0 0 16 13" fill="none" aria-hidden="true">
        <path d="M0 0H16V13H0Z" fill="#17235e" />
        <path d="M0 9.500H16M1 9L6 3L7 9M9 13V1L15 9M4 13L8 2" stroke="#fff" strokeWidth="1.1" />
      </svg>
      {MENU.map((item) => (
        <button key={item} type="button" className="px-2 text-[11px] text-[#3f4458]">
          <Mnemonic text={item} />
        </button>
      ))}
    </nav>
  );
}

function LoadCaseSelect() {
  return (
    <div className="relative mx-[3px] flex w-[154px]">
      <select aria-label="Load case" className={clsx('h-[19px] w-full appearance-none bg-white pl-[3px] text-[11px] text-black outline-none', DIALOG_FONT)}>
        <option>LC1</option>
      </select>
      <span className="pointer-events-none absolute top-[1px] right-[1px] flex h-[17px] w-[13px] items-center justify-center bg-[#dfe3eb]">
        <DownArrow />
      </span>
    </div>
  );
}

function Axes({ x, y }: { x: number; y: number }) {
  return (
    <g transform={`translate(${x} ${y})`}>
      <path d="M0 0H32" stroke="#ff0000" strokeWidth="2" />
      <path d="M31-3L41 0L31 3Z" fill="#a80000" />
      <path d="M0 0V32" stroke="#0000ff" strokeWidth="2" />
      <path d="M-3 31H3L0 41Z" fill="#0000a8" />
      <circle r="2.5" fill="#00b020" />
      <path d="M-2-2L0 1L2-2M0 1V4" stroke="#00ff20" />
      <path d="M48-3L53 4M53-3L48 4" stroke="#ff0000" />
      <path d="M-2 47.500H2.500L-2 53.500H3" stroke="#0000ff" />
    </g>
  );
}

function ModelView() {
  return (
    <svg className="block size-full" fill="none" role="img" aria-label="Model view">
      <defs>
        <linearGradient id="beam" x1="480" y1="258" x2="487" y2="293" gradientUnits="userSpaceOnUse">
          <stop offset="0" stopColor="#5c5cec" />
          <stop offset=".12" stopColor="#6868f8" />
          <stop offset=".92" stopColor="#5f5ff2" />
          <stop offset="1" stopColor="#5555e6" />
        </linearGradient>
      </defs>
      <g transform="translate(-25 -101)">
        <path d="M155 323L813 192L817 212L815 227L161 357Z" fill="url(#beam)" />
        <path d="M155 323.5L813 192.5M168 355.500L814 226.500" stroke="#4a4ad8" strokeWidth="1.200" />
        <path d="M160 350L198 377L135 389.5Z" fill="#ff8080" />
        <circle cx="160" cy="351.5" r="11" fill="#fa4040" />
        <path d="M819 219L857 245L794 258Z" fill="#80ff80" />
        <circle cx="819" cy="219.5" r="11" fill="#40fa40" />
        <path d="M796 272.5L860 260.5" stroke="#40ff40" strokeWidth="3" />
        <circle cx="816.5" cy="208.5" r="1.8" fill="#800000" />
        <circle cx="816.5" cy="340.5" r="2" fill="#600000" />
        <path d="M798 187H808V199H798Z" fill="#fff" />
        <g fontFamily="DejaVu Sans, sans-serif" fontSize="9" fontWeight="bold" textAnchor="middle">
          <text x="803" y="196" fill="#008000">2</text>
          <text x="146" y="328" fill="#ff0000">1</text>
        </g>
        <Axes x={158} y={341} />
        <Axes x={80} y={717} />
      </g>
    </svg>
  );
}

/* ---------- dialog controls ---------- */

function Group({ title, className, children }: { title: string; className?: string; children: ReactNode }) {
  return (
    <section
      className={clsx(
        'border-r border-b border-[#a6a6ee] bg-[#f0f4fa] [clip-path:polygon(0_0,calc(100%-11px)_0,100%_11px,100%_100%,0_100%)]',
        className,
      )}
    >
      <h2 className="h-[17px] border-b border-white bg-[#dce6f4] bg-clip-padding pl-[2px] font-['Liberation_Sans',Arial,sans-serif] text-[11px] leading-4 text-[#1c4477]">
        <Mnemonic text={title} />
      </h2>
      <div className="border-l border-[#dce6f4]">{children}</div>
    </section>
  );
}

interface IconButtonProps {
  name: string;
  icon?: string;
  disabled?: boolean;
  selected?: boolean;
  className?: string;
}

function IconButton({ name, icon = name, disabled, selected, className }: IconButtonProps) {
  return (
    <button
      type="button"
      aria-label={name}
      disabled={disabled}
      className={clsx(
        'flex h-[21px] w-[25px] shrink-0 items-center justify-center border',
        selected ? 'border-[#0a5596] bg-[#cce4f7]' : disabled ? 'border-[#bfbfbf] bg-[#cccccc]' : 'border-[#adadad] bg-[#e1e1e1]',
        className,
      )}
    >
      <svg className="h-4 w-4 overflow-visible" viewBox="0 0 18 18" fill="none" aria-hidden="true">
        {ICONS[icon]}
      </svg>
    </button>
  );
}

function Select({ label, options, className, selectClass }: { label: string; options: string[]; className?: string; selectClass: string }) {
  return (
    <div className={clsx('relative', className)}>
      <select aria-label={label} className={clsx('block h-[21px] w-full appearance-none border pl-[3px] text-[11px] text-black outline-none', selectClass)}>
        {options.map((option) => (
          <option key={option}>{option}</option>
        ))}
      </select>
      <svg className="pointer-events-none absolute top-2 right-[4px] h-[6px] w-[9px]" viewBox="0 0 9 6" fill="none" aria-hidden="true">
        <path d="M.5 .5L4.5 4.5L8.5 .5" stroke="#444" strokeWidth="1.1" />
      </svg>
    </div>
  );
}

function SpinBox({ id, value, disabled, className }: { id: string; value: string; disabled?: boolean; className?: string }) {
  const [text, setText] = useState(value);
  const fill = disabled ? '#606060' : '#000';
  return (
    <div className={clsx('flex h-5 border border-[#7f9db9] p-[1px]', disabled ? 'bg-[#f8f8f8]' : 'bg-white', className)}>
      <input
        id={id}
        disabled={disabled}
        value={text}
        onChange={(e) => setText(e.target.value)}
        className="min-w-0 flex-1 pr-[5px] text-right text-[11px] text-black outline-none disabled:bg-[#f0f0f0]"
      />
      <div className={clsx('flex w-[13px] flex-col gap-[2px] border-x', disabled ? 'border-[#dadada] bg-[#d6d6d6]' : 'border-[#c4c4c4] bg-[#b4b4b4]')}>
        <button type="button" aria-label="Increase" disabled={disabled} className="flex flex-1 items-center justify-center bg-[#f0f0f0]">
          <svg className="h-[3px] w-[5px]" viewBox="0 0 5 3" aria-hidden="true">
            <path d="M0 3H5L2.5 0Z" fill={fill} />
          </svg>
        </button>
        <button type="button" aria-label="Decrease" disabled={disabled} className="flex flex-1 items-center justify-center bg-[#f0f0f0]">
          <svg className="h-[3px] w-[5px]" viewBox="0 0 5 3" aria-hidden="true">
            <path d="M0 0H5L2.5 3Z" fill={fill} />
          </svg>
        </button>
      </div>
      <button
        type="button"
        aria-label="More"
        disabled={disabled}
        className={clsx('ml-[1px] flex w-[9px] items-center justify-center border bg-[#f0f0f0]', disabled ? 'border-[#dadada]' : 'border-[#9a9a9a]')}
      >
        <svg className="h-[5px] w-[3px]" viewBox="0 0 3 5" aria-hidden="true">
          <path d="M0 0V5L3 2.5Z" fill={fill} />
        </svg>
      </button>
    </div>
  );
}

function CheckBox({ initial, children }: { initial: boolean; children?: ReactNode }) {
  const [checked, setChecked] = useState(initial);
  return (
    <label className="flex items-center">
      <span className="relative mr-[3px] size-[13px]">
        <input
          type="checkbox"
          checked={checked}
          onChange={(e) => setChecked(e.target.checked)}
          className="block size-[13px] appearance-none border border-[#333] bg-white"
        />
        {checked && (
          <svg className="pointer-events-none absolute inset-0" viewBox="0 0 13 13" fill="none" aria-hidden="true">
            <path d="M2.5 6.5L5 9L10.5 3" stroke="#222" strokeWidth="1.2" />
          </svg>
        )}
      </span>
      {children}
    </label>
  );
}

/* ---------- dialog content ---------- */

const ROTATIONS = [
  { axis: 'X', value: '0.00' },
  { axis: 'Y', value: '11.31' },
  { axis: 'Z', value: '0.00' },
];

function SupportRotation() {
  return (
    <Group title="Support Rotation">
      <div className="flex pt-1 pb-5 pl-[2px]">
        <div className="w-[95px]">
          <div className="-ml-px h-5 leading-[18px]">
            <Mnemonic text="_Sequence:" />
          </div>
          <div className="relative w-[54px]">
            <Select label="Sequence" options={['XYZ', 'XZY', 'YXZ', 'YZX', 'ZXY', 'ZYX']} selectClass="border-[#adadad] bg-[#e1e1e1]" />
            <span className="pointer-events-none absolute top-[3px] left-[3px] h-[15px] w-[31px] border border-dotted border-black" />
          </div>
        </div>
        <div>
          <div className="h-5 leading-[18px]">
            <Mnemonic text="Rotated _about" />
          </div>
          {ROTATIONS.map((rotation) => (
            <div key={rotation.axis} className="flex h-[23px] items-start leading-5">
              <label htmlFor={`rotation-${rotation.axis}`} className="w-[19px]">
                {rotation.axis}:
              </label>
              <SpinBox id={`rotation-${rotation.axis}`} value={rotation.value} className="w-[83px]" />
              <span className="ml-[5px]">[º]</span>
            </div>
          ))}
        </div>
      </div>
    </Group>
  );
}

function Preview() {
  return (
    <div className="flex flex-col">
      <div className="h-[211px] border-t border-l border-[#a0a0a0] bg-white">
        <svg className="block h-[209px] w-full" viewBox="0 0 249 209" fill="none" role="img" aria-label="Support preview">
          <g stroke="#c8c8c8">
            <path d="M28 42L150 60L221 28L99 10Z" />
            <path d="M28 178L150 196L221 164L99 146Z" />
            <path d="M28.5 42V178M150.5 60V196M220.5 28V164M99.5 10V146" />
          </g>
          <path d="M105 110L142 96Q150 94 153 101L154 112Q152 118 146 120L114 134Q104 132 101 124Z" fill="#22f030" fillOpacity=".85" />
          <path d="M153 101L154 114L179 138L145 154L125 137Z" fill="#40f048" />
          <path d="M133 141L179 138L145 154Z" fill="#38d840" />
          <path d="M125 137L145 107L154 114L148 150Z" fill="#2ee436" />
          <path d="M86 158L102 132L125 123L145 154Z" fill="#80ff80" />
          <circle cx="110" cy="122" r="11" fill="#80ff80" />
          <path d="M106 109L142 97L154 112L125 128Z" fill="#1ee828" fillOpacity=".7" />
          <path d="M101 126L118 116L126 126L116 132Z" fill="#58f060" fillOpacity=".8" />
          <path d="M150.5 94V154" stroke="#8fe48f" />
          {/* global axes */}
          <path d="M99 10L127 14" stroke="#ff0000" strokeWidth="1.6" />
          <path d="M125 12L134 15L124 17Z" fill="#b00000" />
          <path d="M99 10L84 16" stroke="#00ff00" strokeWidth="1.6" />
          <path d="M78 19L83 14L86 18Z" fill="#008a00" />
          <path d="M99 10V42" stroke="#0000ff" strokeWidth="1.6" />
          <path d="M96 39H102L99 49Z" fill="#0000a8" />
          <path d="M140 13L145 19M145 13L140 19" stroke="#ff0000" />
          <path d="M72 19L74.5 22L77 19M74.5 22V26" stroke="#00e000" />
          <path d="M97 55.5H101.500L97 61.500H102" stroke="#0000ff" />
          {/* local axes */}
          <path d="M125 102L150 101" stroke="#ff2000" strokeWidth="1.6" />
          <path d="M150 98L159 100.5L150 103Z" fill="#b00000" />
          <path d="M125 102L110 108" stroke="#00e000" strokeWidth="1.6" />
          <path d="M104 111L109 106L112 111Z" fill="#008a00" />
          <path d="M125 102L130 134" stroke="#0000ff" strokeWidth="1.6" />
          <path d="M127 134L133 132L131 142Z" fill="#0000a8" />
          <path d="M163 97L170 104M170 97L163 104M172.5 96V99" stroke="#ff0000" />
          <path d="M96 110L99 114L102 110M99 114V117M104.5 110V112" stroke="#00e000" />
          <path d="M129 148.500H136L129 156H136M138.5 147V150" stroke="#0000ff" />
        </svg>
      </div>
      <div className="flex flex-1 items-start border-r border-b border-l border-[#a6a6ee] border-l-[#dce6f4] bg-[#f0f4fa] pt-1 pr-[3px] pl-[3px]">
        <IconButton name="Local axes" selected />
        <IconButton name="Render" className="ml-[5px]" />
        <div className="ml-auto flex gap-[5px]">
          <IconButton name="View X" />
          <IconButton name="View -Y" />
          <IconButton name="View Z" />
          <IconButton name="Isometric" />
          <IconButton name="Zoom all" className="ml-1" />
        </div>
      </div>
    </div>
  );
}

interface Condition {
  symbol: string;
  axis: string;
  unit: string;
  checked: boolean;
}

const SUPPORTS: Condition[] = [
  { symbol: 'u', axis: 'X', unit: '[kN/m]', checked: true },
  { symbol: 'u', axis: 'Y', unit: '[kN/m]', checked: true },
  { symbol: 'u', axis: 'Z', unit: '[kN/m]', checked: true },
];

const RESTRAINTS: Condition[] = [
  { symbol: 'φ', axis: 'X', unit: '[kNm/rad]', checked: true },
  { symbol: 'φ', axis: 'Y', unit: '[kNm/rad]', checked: false },
  { symbol: 'φ', axis: 'Z', unit: '[kNm/rad]', checked: true },
];

function ConditionRow({ symbol, axis, unit, checked }: Condition) {
  const id = useId();
  return (
    <div className="grid h-[23px] grid-cols-[93px_39px_192px_1fr_28px] items-start leading-5">
      <CheckBox initial={checked}>
        <span className="ml-[3px]">
          {symbol}
          <span className="text-[9px]">{axis}':</span>
        </span>
      </CheckBox>
      <label htmlFor={id} className="flex justify-between pr-[5px]">
        <span>
          C<sub className="text-[9px] font-bold">{symbol}</sub>
          <span className="text-[9px]">,{axis}'</span>
        </span>
        :
      </label>
      <div className="flex">
        <SpinBox id={id} value={checked ? '' : '0.000'} disabled={checked} className="w-[91px]" />
        <span className={clsx('ml-[5px]', checked ? 'text-[#9a9a9a]' : 'text-black')}>{unit}</span>
      </div>
      <Select label={`Nonlinearity ${symbol}${axis}'`} options={['None']} selectClass="border-[#adadad] bg-[#e1e1e1]" />
      <IconButton name="Edit nonlinearity" icon="Edit disabled" disabled className="mt-px ml-[3px]" />
    </div>
  );
}

function SupportConditions() {
  return (
    <div className="col-span-2">
      <Group title="Support Conditions">
        <div className="pt-[1px] pr-[3px] pb-[6px] pl-[2px]">
          <div className="grid h-[23px] grid-cols-[93px_231px_1fr] leading-6">
            <span className="-ml-px">
              <Mnemonic text="S_upport" />
            </span>
            <span>
              <Mnemonic text="S_pring constant" />
            </span>
            <span className="-ml-px">
              <Mnemonic text="N_onlinearity" />
            </span>
          </div>
          {SUPPORTS.map((row) => (
            <ConditionRow key={row.axis} {...row} />
          ))}
          <div className="-ml-px h-[27px] leading-8">
            <Mnemonic text="R_estraint" />
          </div>
          {RESTRAINTS.map((row) => (
            <ConditionRow key={row.axis} {...row} />
          ))}
        </div>
      </Group>
      <div className="flex h-[30px] items-start border-r border-b border-l border-[#a6a6ee] border-l-[#dce6f4] bg-[#f0f4fa] pt-1 pl-[3px]">
        <IconButton name="Fixed" />
        <IconButton name="Hinged" className="ml-[9px]" />
        <IconButton name="Sliding" className="ml-[10px]" />
        <IconButton name="Sliding X" className="ml-[5px]" />
        <IconButton name="Sliding Y" className="ml-[5px]" />
        <IconButton name="Lateral" className="ml-[9px]" />
        <IconButton name="Free" className="ml-[10px]" />
      </div>
    </div>
  );
}

const READONLY_FIELD = 'h-5 min-w-0 flex-1 border border-[#7a7a7a] bg-[#f0f0f0] px-[5px] text-[11px] text-black outline-none ring-1 ring-white ring-inset';

function EditNodalSupport() {
  return (
    <div
      role="dialog"
      aria-label="Edit Nodal Support"
      className={clsx(
        'absolute top-[30px] right-0 bottom-0 w-[593px] border-t border-l border-[#6b6b6b] bg-[#f0f0f0] text-[11px] text-black shadow-[0_2px_14px_rgba(0,0,0,0.35)]',
        DIALOG_FONT,
      )}
    >
      <div className="flex h-[25px] items-center justify-between bg-white pr-2 pl-[3px]">
        <h2 className="font-[Roboto,sans-serif] text-[12px]">Edit Nodal Support</h2>
        <button type="button" aria-label="Close" className="p-px">
          <svg className="size-[11px]" viewBox="0 0 11 11" fill="none" aria-hidden="true">
            <path d="M.5 .5L10.5 10.5M10.5 .5L.5 10.5" stroke="#000" strokeWidth="1.1" />
          </svg>
        </button>
      </div>

      <div className="grid grid-cols-[319px_1fr] gap-x-2 gap-y-[9px] pt-2 pr-[7px] pl-2">
        <div className="flex flex-col gap-y-[9px]">
          <div className="grid grid-cols-[105px_1fr] gap-[7px]">
            <Group title="Support _No.">
              <div className="flex pt-[3px] pr-[3px] pb-[5px] pl-[2px]">
                <input aria-label="Support No." readOnly value="1" className={READONLY_FIELD} />
              </div>
            </Group>
            <Group title="On N_odes No.">
              <div className="flex gap-1 pt-[3px] pr-[3px] pb-1 pl-[2px]">
                <input aria-label="On Nodes No." readOnly value="1" className={READONLY_FIELD} />
                <IconButton name="Pick nodes" icon="Pick" disabled />
              </div>
            </Group>
          </div>
          <SupportRotation />
          <Group title="Elastic Support via">
            <div className="flex items-center pt-[3px] pb-1 pl-[2px]">
              <div className="w-[115px]">
                <CheckBox initial={false}>
                  <span>
                    <Mnemonic text="Column in _Z..." />
                  </span>
                </CheckBox>
              </div>
              <IconButton name="Edit column" icon="Edit" />
            </div>
          </Group>
        </div>
        <Preview />

        <SupportConditions />

        <Group title="_Comment">
          <div className="flex gap-[3px] pt-[3px] pr-[3px] pb-1 pl-[2px]">
            <Select label="Comment" options={['']} className="flex-1" selectClass="border-[#7a7a7a] bg-white" />
            <IconButton name="Comment library" />
          </div>
        </Group>
        <div className="border-r border-b border-l border-[#a6a6ee] border-l-[#dce6f4] bg-[#f0f4fa]" />
      </div>

      <div className="mt-2 mr-[7px] ml-2 flex items-center border-t border-[#a0a0a0] pt-[11px] pr-px pb-3">
        <IconButton name="Help" className="ml-px" />
        <IconButton name="Notes" className="ml-[9px]" />
        <IconButton name="Units" className="ml-[10px]" />
        <button type="button" className="ml-auto h-[21px] w-[73px] border-2 border-[#0078d7] bg-[#e1e1e1] leading-4">
          OK
        </button>
        <button type="button" className="ml-[9px] h-[21px] w-[73px] border border-[#adadad] bg-[#e1e1e1] leading-4">
          Cancel
        </button>
      </div>
    </div>
  );
}

export default function App() {
  return (
    <div className="flex h-screen flex-col overflow-hidden bg-[#cfd4de] font-['Noto_Sans','Open_Sans',sans-serif]">
      <TitleBar />
      <MenuBar />
      <div className="flex shrink-0">
        <Toolbar label="Standard">
          <Tools items={FILE_TOOLS} />
          <LoadCaseSelect />
          <Tools items={LOAD_TOOLS} />
        </Toolbar>
        <Toolbar label="Work planes">
          <Tools items={PLANE_TOOLS} />
        </Toolbar>
        <Toolbar label="Export">
          <Tools items={EXPORT_TOOLS} />
        </Toolbar>
      </div>
      <div className="flex shrink-0">
        <Toolbar label="Insert">
          <Tools items={INSERT_TOOLS} />
        </Toolbar>
        <Toolbar label="View">
          <Tools items={VIEW_TOOLS} />
        </Toolbar>
        <Toolbar label="Results">
          <Tools items={RESULT_TOOLS} />
        </Toolbar>
      </div>

      <div className="flex min-h-0 flex-1">
        <aside className="w-6 shrink-0 pt-1">
          <button
            type="button"
            className={clsx(
              'h-[158px] w-[21px] border border-l-0 border-[#a5acba] bg-linear-to-r from-[#fff0b8] to-[#ffd66e] pt-[3px] text-left text-[12px] leading-[18px] text-[#55596a] [writing-mode:vertical-rl]',
              DIALOG_FONT,
            )}
          >
            Project Navigator - Data
          </button>
        </aside>
        <main className="relative min-w-0 flex-1 overflow-hidden border-t-2 border-l border-[#6b6b6b] bg-white">
          <ModelView />
          <EditNodalSupport />
        </main>
      </div>
    </div>
  );
}
